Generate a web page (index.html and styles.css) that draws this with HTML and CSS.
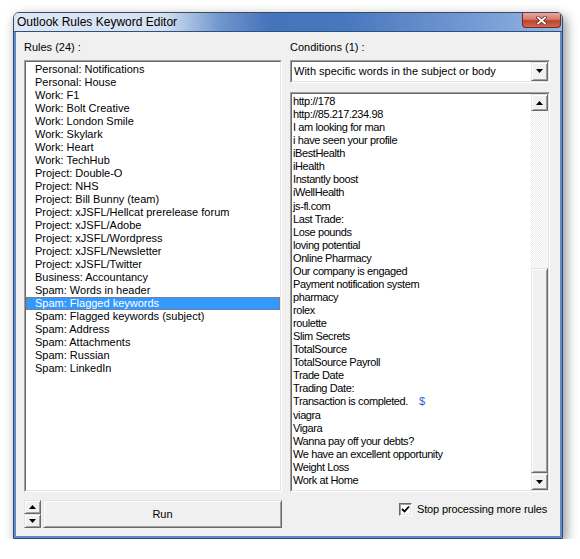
FILE: index.html
```html
<!DOCTYPE html>
<html>
<head>
<meta charset="utf-8">
<title>Outlook Rules Keyword Editor</title>
<link rel="stylesheet" href="styles.css">
</head>
<body>
<div class="window">
  <div class="titlebar">
    <span class="title">Outlook Rules Keyword Editor</span>
    <div class="close">
      <svg width="11" height="9" viewBox="0 0 11 9">
        <path d="M2 1.5 L9 7.5 M9 1.5 L2 7.5" stroke="#6a2a24" stroke-width="3.4" stroke-linecap="square"/>
        <path d="M2 1.5 L9 7.5 M9 1.5 L2 7.5" stroke="#ffffff" stroke-width="1.8" stroke-linecap="square"/>
      </svg>
    </div>
  </div>
  <div class="client">
    <div class="col">
      <div class="label">Rules (24) :</div>
      <div class="sunken listbox">
        <div class="sunken-inner list-inner">
          <div class="item">Personal: Notifications</div>
          <div class="item">Personal: House</div>
          <div class="item">Work: F1</div>
          <div class="item">Work: Bolt Creative</div>
          <div class="item">Work: London Smile</div>
          <div class="item">Work: Skylark</div>
          <div class="item">Work: Heart</div>
          <div class="item">Work: TechHub</div>
          <div class="item">Project: Double-O</div>
          <div class="item">Project: NHS</div>
          <div class="item">Project: Bill Bunny (team)</div>
          <div class="item">Project: xJSFL/Hellcat prerelease forum</div>
          <div class="item">Project: xJSFL/Adobe</div>
          <div class="item">Project: xJSFL/Wordpress</div>
          <div class="item">Project: xJSFL/Newsletter</div>
          <div class="item">Project: xJSFL/Twitter</div>
          <div class="item">Business: Accountancy</div>
          <div class="item">Spam: Words in header</div>
          <div class="item selected">Spam: Flagged keywords</div>
          <div class="item">Spam: Flagged keywords (subject)</div>
          <div class="item">Spam: Address</div>
          <div class="item">Spam: Attachments</div>
          <div class="item">Spam: Russian</div>
          <div class="item">Spam: LinkedIn</div>
        </div>
      </div>
      <div class="actions">
        <div class="spin">
          <div class="btn3d spin-btn">
            <svg width="7" height="4" viewBox="0 0 7 4"><polygon points="0,4 7,4 3.5,0" fill="#000"/></svg>
          </div>
          <div class="btn3d spin-btn">
            <svg width="7" height="4" viewBox="0 0 7 4"><polygon points="0,0 7,0 3.5,4" fill="#000"/></svg>
          </div>
        </div>
        <div class="btn3d run">Run</div>
      </div>
    </div>
    <div class="col">
      <div class="label">Conditions (1) :</div>
      <div class="sunken combo">
        <div class="sunken-inner combo-inner">
          <span class="combo-text">With specific words in the subject or body</span>
          <div class="btn3d combo-btn">
            <svg width="7" height="4" viewBox="0 0 7 4"><polygon points="0,0 7,0 3.5,4" fill="#000"/></svg>
          </div>
        </div>
      </div>
      <div class="sunken memo">
        <div class="sunken-inner memo-inner">
          <div class="memo-text">
            <div>http://178</div>
            <div>http://85.217.234.98</div>
            <div>I am looking for man</div>
            <div>i have seen your profile</div>
            <div>iBestHealth</div>
            <div>iHealth</div>
            <div>Instantly boost</div>
            <div>iWellHealth</div>
            <div>js-fl.com</div>
            <div>Last Trade:</div>
            <div>Lose pounds</div>
            <div>loving potential</div>
            <div>Online Pharmacy</div>
            <div>Our company is engaged</div>
            <div>Payment notification system</div>
            <div>pharmacy</div>
            <div>rolex</div>
            <div>roulette</div>
            <div>Slim Secrets</div>
            <div>TotalSource</div>
            <div>TotalSource Payroll</div>
            <div>Trade Date</div>
            <div>Trading Date:</div>
            <div>Transaction is completed.<span class="spell">$</span></div>
            <div>viagra</div>
            <div>Vigara</div>
            <div>Wanna pay off your debts?</div>
            <div>We have an excellent opportunity</div>
            <div>Weight Loss</div>
            <div>Work at Home</div>
          </div>
          <div class="vscroll">
            <div class="btn3d sb-btn">
              <svg width="7" height="4" viewBox="0 0 7 4"><polygon points="0,4 7,4 3.5,0" fill="#000"/></svg>
            </div>
            <div class="sb-track">
              <div class="btn3d sb-thumb"></div>
            </div>
            <div class="btn3d sb-btn">
              <svg width="7" height="4" viewBox="0 0 7 4"><polygon points="0,0 7,0 3.5,4" fill="#000"/></svg>
            </div>
          </div>
        </div>
      </div>
      <div class="options">
        <div class="checkbox">
          <svg width="9" height="9" viewBox="0 0 9 9"><path d="M1 4 L3.5 6.5 L8 1.5" stroke="#000" stroke-width="1.8" fill="none"/></svg>
        </div>
        <span class="opt-label">Stop processing more rules</span>
      </div>
    </div>
  </div>
</div>
</body>
</html>
```
FILE: styles.css
```css
html, body {
  margin: 0;
  background: #ffffff;
}
body {
  padding: 12px 0 0 13px;
  font-family: "Liberation Sans", Arial, sans-serif;
  font-size: 11px;
  color: #000;
}
.window {
  box-sizing: border-box;
  width: 550px;
  height: 527px;
  border: 1px solid #3b4b63;
  border-radius: 6px 6px 0 0;
  box-shadow: 3px 4px 12px rgba(0, 0, 0, 0.45);
  display: flex;
  flex-direction: column;
  overflow: hidden;
}
.titlebar {
  box-sizing: border-box;
  height: 19px;
  flex: none;
  display: flex;
  justify-content: space-between;
  align-items: flex-start;
  background: linear-gradient(to right, #dde7f4 0px, #d4e0f1 150px, #7098cd 205px, #4674bb 255px, #4877be 330px, #779dd5 470px, #98b6e2 548px);
  border-bottom: 1px solid #2f4f80;
}
.title {
  padding: 2px 0 0 3px;
  font-size: 12px;
  line-height: 15px;
  color: #000;
}
.close {
  box-sizing: border-box;
  width: 39px;
  height: 15px;
  margin-right: 1px;
  border: 1px solid #6d2c25;
  border-top: none;
  border-radius: 0 0 4px 4px;
  background: linear-gradient(to bottom, #e6a89f 0%, #d77b6e 45%, #c0412c 55%, #cf6a50 100%);
  display: flex;
  align-items: center;
  justify-content: center;
}
.client {
  flex: 1;
  background: #f0f0f0;
  border: 2px solid #5b8bd1;
  border-top: none;
  padding: 8px 10px 0 8px;
  display: grid;
  grid-template-columns: 258px 260px;
  column-gap: 8px;
  align-content: start;
}
.col {
  display: flex;
  flex-direction: column;
}
.label {
  height: 13px;
  line-height: 13px;
  padding-top: 1px;
}
.sunken {
  box-sizing: border-box;
  border: 1px solid;
  border-color: #a0a0a0 #ffffff #ffffff #a0a0a0;
}
.sunken-inner {
  box-sizing: border-box;
  height: 100%;
  border: 1px solid;
  border-color: #696969 #e3e3e3 #e3e3e3 #696969;
  background: #ffffff;
}
.listbox {
  margin-top: 6px;
  height: 432px;
}
.list-inner {
  padding-top: 1px;
}
.item {
  height: 13px;
  line-height: 13px;
  padding-left: 9px;
  white-space: nowrap;
}
.item.selected {
  background: #3399ff;
  color: #ffffff;
  outline: 1px dotted #b36b2c;
  outline-offset: -1px;
}
.btn3d {
  box-sizing: border-box;
  background: #f0f0f0;
  border: 1px solid;
  border-color: #e3e3e3 #696969 #696969 #e3e3e3;
  box-shadow: inset 1px 1px 0 #ffffff, inset -1px -1px 0 #a0a0a0;
  display: flex;
  align-items: center;
  justify-content: center;
}
.actions {
  margin-top: 8px;
  height: 28px;
  display: flex;
  gap: 2px;
}
.spin {
  width: 17px;
  display: flex;
  flex-direction: column;
}
.spin-btn {
  height: 14px;
}
.run {
  flex: 1;
  height: 28px;
  font-size: 11px;
}
.combo {
  margin-top: 6px;
  height: 23px;
}
.combo-inner {
  display: flex;
  align-items: center;
  justify-content: space-between;
  padding: 0 0 1px 2px;
}
.combo-text {
  white-space: nowrap;
}
.combo-btn {
  width: 17px;
  height: 19px;
}
.memo {
  margin-top: 9px;
  height: 400px;
}
.memo-inner {
  display: flex;
  overflow: hidden;
}
.memo-text {
  flex: 1;
  padding: 1px 0 0 1px;
  line-height: 13.07px;
  letter-spacing: -0.4px;
  white-space: nowrap;
  overflow: hidden;
}
.spell {
  color: #1f5fd0;
  margin-left: 11px;
}
.vscroll {
  width: 17px;
  flex: none;
  display: flex;
  flex-direction: column;
}
.sb-btn {
  height: 17px;
  flex: none;
}
.sb-track {
  flex: 1;
  display: flex;
  flex-direction: column;
  justify-content: flex-end;
  background: repeating-conic-gradient(#ececec 0 25%, #ffffff 0 50%) 0 0 / 2px 2px;
}
.sb-thumb {
  height: 205px;
}
.options {
  margin-top: 11px;
  display: flex;
  justify-content: flex-end;
  align-items: center;
  gap: 5px;
  padding-right: 3px;
  line-height: 13px;
}
.opt-label {
  letter-spacing: -0.15px;
}
.checkbox {
  box-sizing: border-box;
  width: 13px;
  height: 13px;
  background: #ffffff;
  border: 1px solid;
  border-color: #696969 #ffffff #ffffff #696969;
  box-shadow: inset 1px 1px 0 #a0a0a0, inset -1px -1px 0 #e3e3e3;
  display: flex;
  align-items: center;
  justify-content: center;
}
```
